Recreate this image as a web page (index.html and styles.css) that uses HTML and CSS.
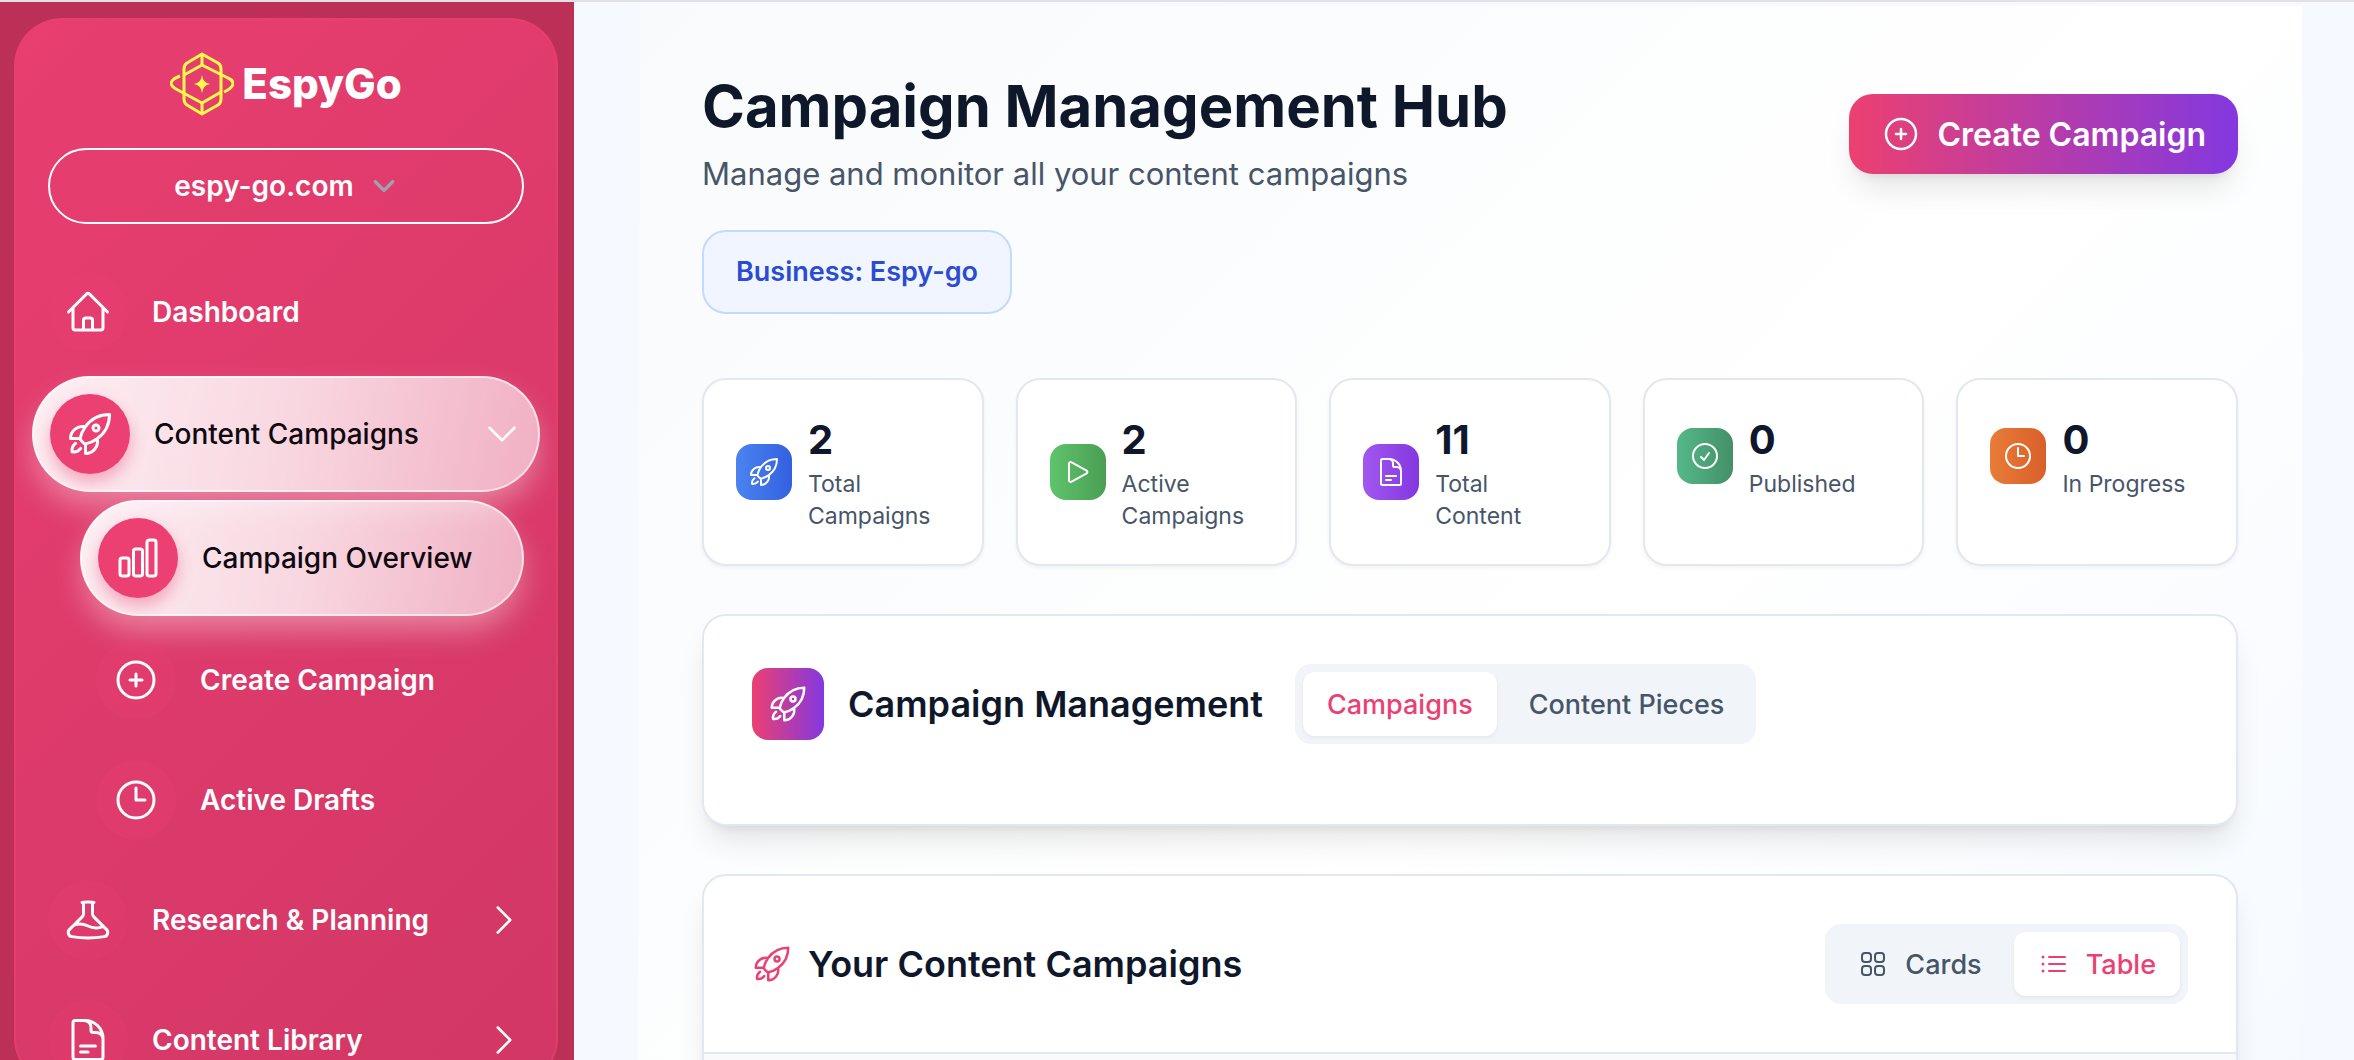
FILE: index.html
```html
<!DOCTYPE html>
<html lang="en">
  <head>
    <meta charset="UTF-8" />
    <meta name="viewport" content="width=device-width, initial-scale=1.0" />
    <title>Campaign Management Hub</title>
    <link rel="stylesheet" href="styles.css">
  </head>
  <body>
    <!-- shared icons -->
    <svg class="sprite" aria-hidden="true">
      <symbol id="rocket" viewBox="0 0 24 24">
        <path d="M15.59 14.37a6 6 0 0 1-5.84 7.38v-4.8m5.84-2.58a14.98 14.98 0 0 0 6.16-12.12A14.98 14.98 0 0 0 9.631 8.41m5.96 5.96a14.926 14.926 0 0 1-5.841 2.58m-.119-8.54a6 6 0 0 0-7.381 5.84h4.8m2.581-5.84a14.927 14.927 0 0 0-2.58 5.84m2.699 2.7c-.103.021-.207.041-.311.06a15.09 15.09 0 0 1-2.448-2.448 14.9 14.9 0 0 1 .06-.312m-2.24 2.39a4.493 4.493 0 0 0-1.757 4.306 4.493 4.493 0 0 0 4.306-1.758M16.5 9a1.5 1.5 0 1 1-3 0 1.5 1.5 0 0 1 3 0Z" />
      </symbol>
      <symbol id="home" viewBox="0 0 24 24">
        <path d="m2.25 12 8.954-8.955c.44-.439 1.152-.439 1.591 0L21.75 12M4.5 9.75v10.125c0 .621.504 1.125 1.125 1.125H9.75v-4.875c0-.621.504-1.125 1.125-1.125h2.25c.621 0 1.125.504 1.125 1.125V21h4.125c.621 0 1.125-.504 1.125-1.125V9.75M8.25 21h8.25" />
      </symbol>
      <symbol id="chart" viewBox="0 0 24 24">
        <path d="M3 13.125C3 12.504 3.504 12 4.125 12h2.25c.621 0 1.125.504 1.125 1.125v6.75C7.5 20.496 6.996 21 6.375 21h-2.25A1.125 1.125 0 0 1 3 19.875v-6.75ZM9.75 8.625c0-.621.504-1.125 1.125-1.125h2.25c.621 0 1.125.504 1.125 1.125v11.25c0 .621-.504 1.125-1.125 1.125h-2.25a1.125 1.125 0 0 1-1.125-1.125V8.625ZM16.5 4.125c0-.621.504-1.125 1.125-1.125h2.25C20.496 3 21 3.504 21 4.125v15.75c0 .621-.504 1.125-1.125 1.125h-2.25a1.125 1.125 0 0 1-1.125-1.125V4.125Z" />
      </symbol>
      <symbol id="plus" viewBox="0 0 24 24">
        <path d="M12 9v6m3-3H9m12 0a9 9 0 1 1-18 0 9 9 0 0 1 18 0Z" />
      </symbol>
      <symbol id="clock" viewBox="0 0 24 24">
        <path d="M12 6v6h4.5m4.5 0a9 9 0 1 1-18 0 9 9 0 0 1 18 0Z" />
      </symbol>
      <symbol id="check" viewBox="0 0 24 24">
        <path d="M9 12.75 11.25 15 15 9.75M21 12a9 9 0 1 1-18 0 9 9 0 0 1 18 0Z" />
      </symbol>
      <symbol id="beaker" viewBox="0 0 24 24">
        <path d="M9.75 3.104v5.714a2.25 2.25 0 0 1-.659 1.591L5 14.5M9.75 3.104c-.251.023-.501.05-.75.082m.75-.082a24.301 24.301 0 0 1 4.5 0m0 0v5.714c0 .597.237 1.17.659 1.591L19.8 15.3M14.25 3.104c.251.023.501.05.75.082M19.8 15.3l-1.57.393A9.065 9.065 0 0 1 12 15a9.065 9.065 0 0 0-6.23-.693L5 14.5m14.8.8 1.402 1.402c1.232 1.232.65 3.318-1.067 3.611A48.309 48.309 0 0 1 12 21c-2.773 0-5.491-.235-8.135-.687-1.718-.293-2.3-2.379-1.067-3.61L5 14.5" />
      </symbol>
      <symbol id="document" viewBox="0 0 24 24">
        <path d="M19.5 14.25v-2.625a3.375 3.375 0 0 0-3.375-3.375h-1.5A1.125 1.125 0 0 1 13.5 7.125v-1.5a3.375 3.375 0 0 0-3.375-3.375H8.25m0 12.75h7.5m-7.5 3H12M10.5 2.25H5.625c-.621 0-1.125.504-1.125 1.125v17.25c0 .621.504 1.125 1.125 1.125h12.75c.621 0 1.125-.504 1.125-1.125V11.25a9 9 0 0 0-9-9Z" />
      </symbol>
      <symbol id="play" viewBox="0 0 24 24">
        <path d="M5.25 5.653c0-.856.917-1.398 1.667-.986l11.54 6.347a1.125 1.125 0 0 1 0 1.972l-11.54 6.347a1.125 1.125 0 0 1-1.667-.986V5.653Z" />
      </symbol>
      <symbol id="grid" viewBox="0 0 24 24">
        <path d="M3.75 6A2.25 2.25 0 0 1 6 3.75h2.25A2.25 2.25 0 0 1 10.5 6v2.25a2.25 2.25 0 0 1-2.25 2.25H6a2.25 2.25 0 0 1-2.25-2.25V6ZM3.75 15.75A2.25 2.25 0 0 1 6 13.5h2.25a2.25 2.25 0 0 1 2.25 2.25V18a2.25 2.25 0 0 1-2.25 2.25H6A2.25 2.25 0 0 1 3.75 18v-2.25ZM13.5 6a2.25 2.25 0 0 1 2.25-2.25H18A2.25 2.25 0 0 1 20.25 6v2.25A2.25 2.25 0 0 1 18 10.5h-2.25a2.25 2.25 0 0 1-2.25-2.25V6ZM13.5 15.75a2.25 2.25 0 0 1 2.25-2.25H18a2.25 2.25 0 0 1 2.25 2.25V18A2.25 2.25 0 0 1 18 20.25h-2.25A2.25 2.25 0 0 1 13.5 18v-2.25Z" />
      </symbol>
      <symbol id="list" viewBox="0 0 24 24">
        <path d="M8.25 6.75h12M8.25 12h12m-12 5.25h12M3.75 6.75h.007v.008H3.75V6.75Zm.375 0a.375.375 0 1 1-.75 0 .375.375 0 0 1 .75 0ZM3.75 12h.007v.008H3.75V12Zm.375 0a.375.375 0 1 1-.75 0 .375.375 0 0 1 .75 0Zm-.375 5.25h.007v.008H3.75v-.008Zm.375 0a.375.375 0 1 1-.75 0 .375.375 0 0 1 .75 0Z" />
      </symbol>
      <symbol id="chevron-down" viewBox="0 0 24 24">
        <path d="m19.5 8.25-7.5 7.5-7.5-7.5" />
      </symbol>
      <symbol id="chevron-right" viewBox="0 0 24 24">
        <path d="m8.25 4.5 7.5 7.5-7.5 7.5" />
      </symbol>
    </svg>

    <div class="layout">
      <aside class="sidebar">
        <div class="panel">
          <a href="#" class="logo">
            <svg class="logo-mark" viewBox="0 0 64 64" aria-hidden="true">
              <path d="M32 2 17 11Q14 13 14 17V47Q14 51 17 53L32 62 48 53Q51 51 51 47V17Q51 13 48 11Z" />
              <path d="M32 2V13M32 51V62" />
              <path d="M14 23 32 13 58 26Q63 28 63 32Q62 36 54 40" />
              <path d="M51 40 32 51 6 37Q1 34 1 31Q2 27 10 24" />
              <path class="star" d="M32 23Q33 31 40 32Q33 33 32 41Q31 33 24 32Q31 31 32 23Z" />
            </svg>
            <span>EspyGo</span>
          </a>

          <button class="site-picker" type="button">
            espy-go.com
            <svg class="icon icon-sm"><use href="#chevron-down" /></svg>
          </button>

          <nav class="menu">
            <a href="#" class="item">
              <span class="bubble"><svg class="icon"><use href="#home" /></svg></span>
              <span class="label">Dashboard</span>
            </a>
            <a href="#" class="item active">
              <span class="bubble"><svg class="icon"><use href="#rocket" /></svg></span>
              <span class="label">Content Campaigns</span>
              <svg class="icon icon-md"><use href="#chevron-down" /></svg>
            </a>
            <div class="submenu">
              <a href="#" class="item active">
                <span class="bubble"><svg class="icon"><use href="#chart" /></svg></span>
                <span class="label">Campaign Overview</span>
              </a>
              <a href="#" class="item">
                <span class="bubble"><svg class="icon"><use href="#plus" /></svg></span>
                <span class="label">Create Campaign</span>
              </a>
              <a href="#" class="item">
                <span class="bubble"><svg class="icon"><use href="#clock" /></svg></span>
                <span class="label">Active Drafts</span>
              </a>
            </div>
            <a href="#" class="item">
              <span class="bubble"><svg class="icon"><use href="#beaker" /></svg></span>
              <span class="label">Research &amp; Planning</span>
              <svg class="icon icon-md"><use href="#chevron-right" /></svg>
            </a>
            <a href="#" class="item">
              <span class="bubble"><svg class="icon"><use href="#document" /></svg></span>
              <span class="label">Content Library</span>
              <svg class="icon icon-md"><use href="#chevron-right" /></svg>
            </a>
          </nav>
        </div>
      </aside>

      <main class="main">
        <div class="content">
          <header class="page-header">
            <div>
              <h1>Campaign Management Hub</h1>
              <p class="subtitle">Manage and monitor all your content campaigns</p>
            </div>
            <button class="create-btn" type="button">
              <svg class="icon icon-md"><use href="#plus" /></svg>
              Create Campaign
            </button>
          </header>

          <p class="business">Business: Espy-go</p>

          <section class="stats">
            <div class="stat">
              <span class="tile blue"><svg class="icon icon-sm"><use href="#rocket" /></svg></span>
              <div>
                <p class="value">2</p>
                <p class="name">Total Campaigns</p>
              </div>
            </div>
            <div class="stat">
              <span class="tile green"><svg class="icon icon-sm"><use href="#play" /></svg></span>
              <div>
                <p class="value">2</p>
                <p class="name">Active Campaigns</p>
              </div>
            </div>
            <div class="stat">
              <span class="tile purple"><svg class="icon icon-sm"><use href="#document" /></svg></span>
              <div>
                <p class="value">11</p>
                <p class="name">Total Content</p>
              </div>
            </div>
            <div class="stat">
              <span class="tile emerald"><svg class="icon icon-sm"><use href="#check" /></svg></span>
              <div>
                <p class="value">0</p>
                <p class="name">Published</p>
              </div>
            </div>
            <div class="stat">
              <span class="tile orange"><svg class="icon icon-sm"><use href="#clock" /></svg></span>
              <div>
                <p class="value">0</p>
                <p class="name">In Progress</p>
              </div>
            </div>
          </section>

          <section class="card management">
            <span class="tile large brand"><svg class="icon icon-md"><use href="#rocket" /></svg></span>
            <h2>Campaign Management</h2>
            <div class="tabs">
              <button class="tab selected" type="button">Campaigns</button>
              <button class="tab" type="button">Content Pieces</button>
            </div>
          </section>

          <section class="card campaigns">
            <div class="card-header">
              <svg class="icon icon-md pink"><use href="#rocket" /></svg>
              <h2>Your Content Campaigns</h2>
              <div class="tabs">
                <button class="tab" type="button">
                  <svg class="icon icon-sm"><use href="#grid" /></svg>
                  Cards
                </button>
                <button class="tab selected" type="button">
                  <svg class="icon icon-sm"><use href="#list" /></svg>
                  Table
                </button>
              </div>
            </div>
            <div class="table-area"></div>
          </section>
        </div>
      </main>
    </div>
  </body>
</html>
```

FILE: styles.css
```css
* {
  box-sizing: border-box;
}
body {
  margin: 0;
  height: 100vh;
  overflow: hidden;
  border-top: 2px solid #e2e2e2;
  background: #f6f9ff;
  color: #0f172a;
  font-family: Inter, "Open Sans", sans-serif;
}
h1,
h2,
p {
  margin: 0;
}
a {
  color: inherit;
  text-decoration: none;
}
button {
  font: inherit;
  cursor: pointer;
}
.sprite {
  display: none;
}
.icon {
  width: 48px;
  height: 48px;
  flex-shrink: 0;
  fill: none;
  stroke: currentColor;
  stroke-width: 1.5;
  stroke-linecap: round;
  stroke-linejoin: round;
}
.icon-md {
  width: 40px;
  height: 40px;
}
.icon-sm {
  width: 32px;
  height: 32px;
}
.layout {
  display: flex;
  align-items: flex-start;
}

/* sidebar */
.sidebar {
  width: 574px;
  flex-shrink: 0;
  padding: 16px 16px 0 14px;
  background: #bc3057;
}
.panel {
  height: calc(100vh + 8px);
  overflow: hidden;
  padding: 32px 16px;
  border: 2px solid rgba(236, 64, 114, 0.6);
  border-radius: 48px;
  background: linear-gradient(135deg, #e83e70, #d13765) border-box;
  color: #fff;
}
.logo {
  display: flex;
  justify-content: center;
  align-items: center;
  gap: 8px;
  font-size: 42px;
  font-weight: 800;
  line-height: 64px;
}
.logo-mark {
  width: 64px;
  height: 64px;
  fill: none;
  stroke: #fdf84a;
  stroke-width: 3;
  stroke-linejoin: round;
}
.logo-mark .star {
  fill: #fdf84a;
  stroke: none;
}
.site-picker {
  display: flex;
  justify-content: center;
  align-items: center;
  gap: 16px;
  width: calc(100% - 32px);
  height: 76px;
  margin: 32px 16px;
  border: 2px solid #fff;
  border-radius: 38px;
  background: none;
  color: #fff;
  font-size: 28px;
  font-weight: 600;
}
.site-picker .icon {
  width: 28px;
  height: 28px;
  color: #9ca3af;
  stroke-width: 3;
}
.menu,
.submenu {
  display: flex;
  flex-direction: column;
  gap: 8px;
}
.submenu {
  padding: 0 16px 0 48px;
}
.item {
  display: flex;
  align-items: center;
  gap: 24px;
  padding: 16px;
  border-radius: 58px;
  font-size: 28px;
  font-weight: 600;
}
.item .label {
  flex: 1;
  white-space: nowrap;
}
.bubble {
  display: flex;
  justify-content: center;
  align-items: center;
  width: 80px;
  height: 80px;
  flex-shrink: 0;
  border-radius: 50%;
  background: rgba(236, 64, 114, 0.25);
}
.item.active {
  border: 2px solid rgba(255, 255, 255, 0.6);
  background: linear-gradient(100deg, rgba(255, 255, 255, 0.92), rgba(255, 255, 255, 0.8) 50%, rgba(255, 255, 255, 0.6)) border-box;
  box-shadow: 0 16px 32px -4px rgba(255, 255, 255, 0.4);
  font-weight: 500;
}
.item.active .label {
  color: #0f0a10;
}
.item.active .bubble {
  background: #ec4072;
  box-shadow: 0 8px 16px rgba(236, 64, 114, 0.4);
}

/* main area */
.main {
  flex: 1;
  padding: 4px 52px 0 64px;
}
.content {
  padding: 64px;
  background: linear-gradient(135deg, #f8fafc, #ffffff 50%, #f3f8ff);
}
.page-header {
  display: flex;
  justify-content: space-between;
  align-items: center;
}
h1 {
  margin-bottom: 8px;
  font-size: 58px;
  font-weight: 700;
  line-height: 72px;
}
.subtitle {
  color: #475569;
  font-size: 31px;
  line-height: 48px;
}
.create-btn {
  display: flex;
  align-items: center;
  gap: 16px;
  height: 80px;
  padding: 0 32px;
  border: none;
  border-radius: 24px;
  background: linear-gradient(90deg, #ec4070, #8338e0);
  box-shadow: 0 20px 30px -6px rgba(0, 0, 0, 0.1), 0 8px 12px -8px rgba(0, 0, 0, 0.1);
  color: #fff;
  font-size: 32px;
  font-weight: 600;
}
.business {
  width: fit-content;
  margin: 32px 0 64px;
  padding: 20px 32px;
  border: 2px solid #bfdbfe;
  border-radius: 24px;
  background: #f0f5ff;
  color: #2a4bd2;
  font-size: 27px;
  font-weight: 600;
  line-height: 40px;
}

.stats {
  display: grid;
  grid-template-columns: repeat(5, 1fr);
  gap: 32px;
}
.stat {
  display: grid;
  grid-template-columns: auto 1fr;
  align-content: start;
  align-items: center;
  gap: 16px;
  padding: 32px;
  border: 2px solid #e2e8f0;
  border-radius: 24px;
  background: #fff;
  box-shadow: 0 2px 4px rgba(0, 0, 0, 0.05);
}
.tile {
  display: flex;
  justify-content: center;
  align-items: center;
  width: 56px;
  height: 56px;
  flex-shrink: 0;
  border-radius: 16px;
  color: #fff;
}
.tile.large {
  width: 72px;
  height: 72px;
}
.blue {
  background: linear-gradient(90deg, #4b83f0, #3460e0);
}
.green {
  background: linear-gradient(90deg, #5fc46c, #4a9e53);
}
.purple {
  background: linear-gradient(90deg, #a058f0, #8437e0);
}
.emerald {
  background: linear-gradient(90deg, #55b888, #439068);
}
.orange {
  background: linear-gradient(90deg, #e87c38, #d95f2a);
}
.brand {
  background: linear-gradient(90deg, #ec4070, #8338e0);
}
.value {
  font-size: 40px;
  font-weight: 700;
  line-height: 56px;
}
.name {
  color: #475569;
  font-size: 23px;
  line-height: 32px;
}

.card {
  margin-top: 48px;
  border: 2px solid #e2e8f0;
  border-radius: 24px;
  background: #fff;
  box-shadow: 0 20px 30px -6px rgba(0, 0, 0, 0.1), 0 8px 12px -8px rgba(0, 0, 0, 0.1);
}
.card h2 {
  font-size: 36px;
  font-weight: 600;
}
.management {
  display: flex;
  align-items: center;
  gap: 24px;
  padding: 48px 48px 80px;
}
.management .tabs {
  margin-left: 8px;
}
.card-header {
  display: flex;
  align-items: center;
  gap: 16px;
  padding: 48px;
  border-bottom: 2px solid #e2e8f0;
}
.card-header .tabs {
  margin-left: auto;
}
.pink {
  color: #ec4072;
}
.table-area {
  height: 400px;
  border-radius: 0 0 24px 24px;
  background: #f8fafc;
}
.tabs {
  display: flex;
  gap: 8px;
  padding: 8px;
  border-radius: 16px;
  background: #f1f5f9;
}
.tab {
  display: flex;
  align-items: center;
  gap: 16px;
  height: 64px;
  padding: 0 24px;
  border: none;
  border-radius: 12px;
  background: none;
  color: #475569;
  font-size: 27px;
  font-weight: 500;
}
.tab.selected {
  background: #fff;
  box-shadow: 0 2px 4px rgba(0, 0, 0, 0.06);
  color: #ec4072;
}
```
